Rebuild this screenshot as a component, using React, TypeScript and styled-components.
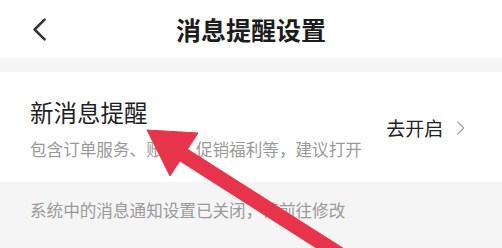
import React from "react";
import styled, { createGlobalStyle } from "styled-components";

const GlobalStyle = createGlobalStyle`
  html, body {
    margin: 0;
    padding: 0;
    background: #ffffff;
  }
  body {
    font-family: "Noto Sans CJK SC", "Noto Sans", sans-serif;
  }
`;

const Page = styled.div`
  position: relative;
  width: 502px;
  height: 248px;
  overflow: hidden;
  background: #f5f5f5;
`;

const Header = styled.div`
  height: 58px;
  background: #ffffff;
  display: grid;
  grid-template-columns: 60px 1fr 60px;
  align-items: center;
`;

const BackButton = styled.div`
  display: flex;
  align-items: center;
  padding-left: 33px;
  height: 100%;
`;

const Title = styled.div`
  text-align: center;
  font-size: 25px;
  font-weight: 700;
  color: #1c1c1c;
  line-height: 30px;
`;

const Spacer = styled.div`
  height: 14px;
`;

const Card = styled.div`
  background: #ffffff;
  height: 110px;
  box-sizing: border-box;
  padding: 25px 37px 0 30px;
  display: flex;
  justify-content: space-between;
`;

const TextBlock = styled.div`
  display: flex;
  flex-direction: column;
  gap: 11px;
`;

const ItemTitle = styled.div`
  font-size: 23.5px;
  line-height: 30px;
  color: #1f1f1f;
`;

const Hint = styled.div<{ $top?: number }>`
  font-size: 16.6px;
  line-height: 22px;
  color: #9a9a9a;
  white-space: nowrap;
  padding-top: ${(p) => p.$top ?? 0}px;
`;

const Action = styled.div`
  display: flex;
  align-items: center;
  gap: 14px;
  align-self: center;
  margin-top: -24px;
  font-size: 19px;
  color: #222222;
  line-height: 24px;
`;

const Notice = styled.div`
  padding: 17px 30px 0;
`;

const Overlay = styled.svg`
  position: absolute;
  left: 0;
  top: 0;
  pointer-events: none;
`;

const Chevron = ({ dir, size, color, width }: { dir: "left" | "right"; size: number; color: string; width: number }) => (
  <svg width={size * 0.55} height={size} viewBox="0 0 12 22" fill="none">
    <path
      d={dir === "left" ? "M11 1.5 L1.5 11 L11 20.5" : "M1 1.5 L10.5 11 L1 20.5"}
      stroke={color}
      strokeWidth={width}
      strokeLinecap="round"
      strokeLinejoin="round"
    />
  </svg>
);

export default function App() {
  return (
    <>
      <GlobalStyle />
      <Page>
        <Header>
          <BackButton>
            <Chevron dir="left" size={23} color="#333333" width={2.4} />
          </BackButton>
          <Title>消息提醒设置</Title>
          <div />
        </Header>
        <Spacer />
        <Card>
          <TextBlock>
            <ItemTitle>新消息提醒</ItemTitle>
            <Hint>包含订单服务、账户、促销福利等，建议打开</Hint>
          </TextBlock>
          <Action>
            <span>去开启</span>
            <Chevron dir="right" size={14} color="#9a9a9a" width={1.8} />
          </Action>
        </Card>
        <Notice>
          <Hint>系统中的消息通知设置已关闭，请前往修改</Hint>
        </Notice>
        <Overlay width="502" height="248" viewBox="0 0 502 248">
          <line x1="182" y1="154" x2="430" y2="312" stroke="#e8344a" strokeWidth="15" />
          <polygon points="147,130 198,133 170,176" fill="#e8344a" strokeLinejoin="round" stroke="#e8344a" strokeWidth="1" />
        </Overlay>
      </Page>
    </>
  );
}
